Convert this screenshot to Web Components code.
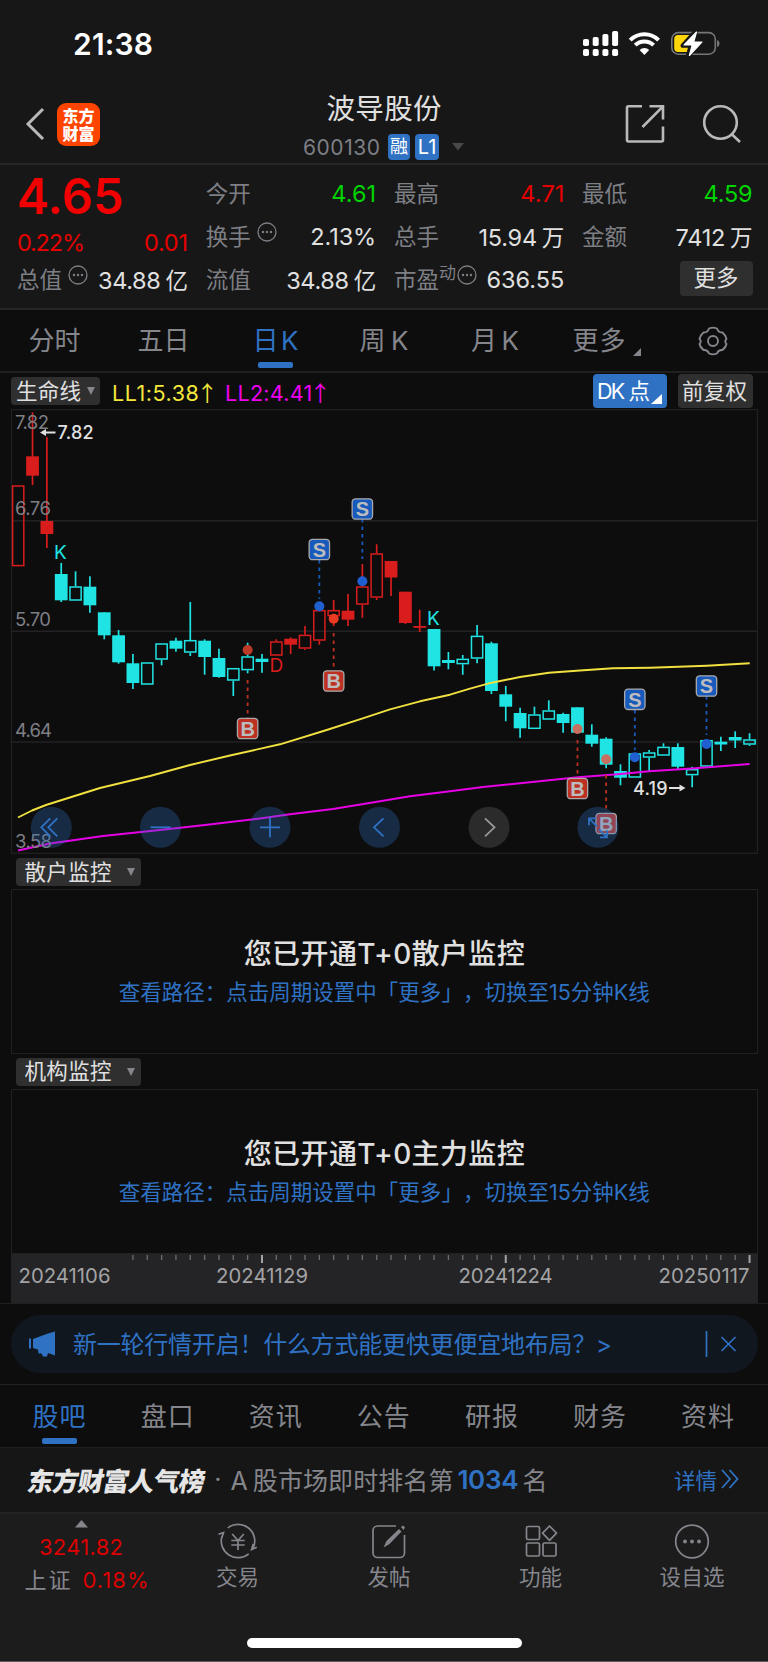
<!DOCTYPE html>
<html lang="zh-CN">
<head>
<meta charset="utf-8">
<title>波导股份 600130</title>
<style>
    html, body {
        margin: 0;
        background: #0d0d0d;
    }
    body {
        width: 768px;
        height: 1662px;
        overflow: hidden;
        font-family: Inter, "Noto Sans CJK SC", sans-serif;
        color: #e0e0e0;
    }
</style>
</head>
<body>
<stock-page></stock-page>

<script>
// Text stretched or tightened to a given width through letter-spacing
class FitText extends HTMLElement {
    connectedCallback() {
        const shadowRoot = this.attachShadow({ mode: 'open' });
        shadowRoot.innerHTML = `
        <style>
            :host {
                display: inline-block;
                white-space: nowrap;
                flex: none;
            }
            span { display: inline-block; }
            ::slotted(i) {
                font-style: normal;
                margin-left: 5px;
            }
            ::slotted(i.arrow) {
                font-family: "Noto Sans CJK SC", sans-serif;
                margin: 0 -5px 0 -3px;
            }
        </style>
        <span><slot></slot></span>
        `;
        const width = parseFloat(this.getAttribute('w'));
        const span = shadowRoot.querySelector('span');
        const count = [...this.textContent].length;
        if (width && count > 1) {
            const spacing = (width - span.getBoundingClientRect().width) / (count - 1);
            span.style.letterSpacing = spacing + 'px';
            span.style.marginRight = -spacing + 'px';
        }
    }
}

class StatusBar extends HTMLElement {
    connectedCallback() {
        const shadowRoot = this.attachShadow({ mode: 'open' });
        let signal = '';
        [[39, 7], [37, 9], [34, 12], [31, 15]].forEach(([y, h], i) => {
            const x = 12 + i * 9.7;
            signal += `<rect x="${x}" y="${y}" width="6" height="${h}" rx="1.8"/><rect x="${x}" y="49" width="6" height="7" rx="1.8"/>`;
        });
        shadowRoot.innerHTML = `
        <style>
            :host {
                display: flex;
                justify-content: space-between;
                height: 88px;
                padding: 0 37px 0 73px;
                background: #171717;
            }
            fit-text {
                font-size: 30px;
                font-weight: 600;
                line-height: 88px;
                color: #fff;
            }
        </style>
        <fit-text w="80">21:38</fit-text>
        <svg width="160" height="88" viewBox="0 0 160 88" fill="#fff">
            ${signal}
            <g fill="none" stroke="#fff" stroke-width="4">
                <path d="M59.2 40.2a20 20 0 0 1 28.4 0"/>
                <path d="M64.2 45.2a13 13 0 0 1 18.4 0"/>
            </g>
            <path d="M68.6 50a7 7 0 0 1 9.6 0l-4.8 5z"/>
            <rect x="100.8" y="32.6" width="43.5" height="21.6" rx="6.5" fill="none" stroke="#767676" stroke-width="1.6"/>
            <path d="M146 40v7q2.6-.8 2.6-3.5t-2.6-3.5z" fill="#767676"/>
            <rect x="103.2" y="35" width="18" height="17" rx="4" fill="#ffd60a"/>
            <path d="M125 30.5l-13.5 15.2h8l-3 11.5 13.5-15.5h-8z" stroke="#171717" stroke-width="4" stroke-linejoin="round"/>
            <path d="M125.5 32l-12.5 13h8.2l-2.8 10.5 12.5-13.5h-8.2z" stroke="#fff" stroke-width="1.2" stroke-linejoin="round"/>
        </svg>
        `;
    }
}

class StockHeader extends HTMLElement {
    connectedCallback() {
        const shadowRoot = this.attachShadow({ mode: 'open' });
        shadowRoot.innerHTML = `
        <style>
            :host {
                display: grid;
                grid-template-columns: 280px 208px 280px;
                height: 75px;
                background: #171717;
                border-bottom: 2px solid #262626;
            }
            .left {
                display: flex;
                align-items: center;
                padding: 0 0 4px 25px;
                gap: 11px;
            }
            .logo {
                width: 43px;
                height: 43px;
                border-radius: 9px;
                background: #ff4400;
                color: #fff;
                font-size: 16px;
                font-weight: 900;
                line-height: 18px;
                text-align: center;
                padding-top: 4px;
                box-sizing: border-box;
            }
            .center {
                display: flex;
                flex-direction: column;
                align-items: center;
            }
            .name {
                font-size: 28.5px;
                line-height: 42px;
            }
            .code {
                display: flex;
                align-items: center;
                height: 34px;
                width: 162px;
                font-size: 21px;
                color: #7e7f85;
            }
            .badge {
                background: #2f72c4;
                border-radius: 4px;
                color: #fff;
                height: 26px;
                width: 22px;
                line-height: 26px;
                text-align: center;
                font-size: 18px;
                margin-left: 8px;
            }
            .badge + .badge {
                font-size: 20px;
                width: 24px;
                margin-left: 5px;
            }
            .code svg { margin-left: 13px; }
            .right {
                display: flex;
                justify-content: flex-end;
                align-items: center;
                gap: 36px;
                padding: 0 26px 5px 0;
            }
        </style>
        <div class="left">
            <svg width="21" height="34" viewBox="0 0 21 34" fill="none" stroke="#b9b9b9" stroke-width="3"><path d="M18 2L3 17l15 15"/></svg>
            <div class="logo">东方<br>财富</div>
        </div>
        <div class="center">
            <fit-text class="name" w="115">波导股份</fit-text>
            <div class="code">
                <fit-text w="77">600130</fit-text>
                <span class="badge">融</span><span class="badge">L1</span>
                <svg width="12" height="8" viewBox="0 0 12 8" fill="#48484a"><path d="M0 0h12L6 7.5z"/></svg>
            </div>
        </div>
        <div class="right">
            <svg width="42" height="42" viewBox="0 0 42 42" fill="none" stroke="#b9b9b9" stroke-width="2.6">
                <path d="M18 3.3H4.5a1.5 1.5 0 0 0-1.5 1.5V37a1.5 1.5 0 0 0 1.5 1.5h33A1.5 1.5 0 0 0 39 37V23.5M25.5 3.3H39V16.5M39 3.3L18.5 24"/>
            </svg>
            <svg width="40" height="42" viewBox="0 0 40 42" fill="none" stroke="#b9b9b9" stroke-width="2.6">
                <circle cx="18.5" cy="19.5" r="16.3"/><path d="M29.5 31l8.5 8"/>
            </svg>
        </div>
        `;
    }
}

class InfoDots extends HTMLElement {
    connectedCallback() {
        const shadowRoot = this.attachShadow({ mode: 'open' });
        shadowRoot.innerHTML = `
        <style>
            :host { display: block; width: 20px; height: 20px; margin: 0 0 6px 6px; }
            svg { display: block; }
        </style>
        <svg width="20" height="20" viewBox="0 0 20 20" fill="#7e7f85">
            <circle cx="10" cy="10" r="9" fill="none" stroke="#7e7f85" stroke-width="1.3"/>
            <circle cx="6" cy="10" r="1.2"/><circle cx="10" cy="10" r="1.2"/><circle cx="14" cy="10" r="1.2"/>
        </svg>
        `;
    }
}

class QuoteCell extends HTMLElement {
    connectedCallback() {
        const shadowRoot = this.attachShadow({ mode: 'open' });
        const unit = this.getAttribute('unit');
        shadowRoot.innerHTML = `
        <style>
            :host {
                display: flex;
                align-items: center;
                justify-content: space-between;
                height: 43px;
                font-size: 22.5px;
                color: #e0e0e0;
            }
            .label {
                display: flex;
                align-items: center;
                color: #7e7f85;
                margin-top: -1px;
            }
            fit-text { font-size: 23.5px; }
            i { font-size: 22.5px; }
            .plain { margin-top: 1px; }
            :host([dir-color="up"]) fit-text { color: #e60000; }
            :host([dir-color="down"]) fit-text { color: #00d400; }
            sup {
                font-size: 17px;
                line-height: 17px;
                margin-bottom: 9px;
                vertical-align: baseline;
            }
            sup + info-dots { margin-left: 1px; }
        </style>
        <div class="label"><slot></slot>${this.hasAttribute('sup') ? `<sup>${this.getAttribute('sup')}</sup>` : ''}${this.hasAttribute('info') ? '<info-dots></info-dots>' : ''}</div>
        <fit-text class="${unit ? '' : 'plain'}" w="${this.getAttribute('w')}">${this.getAttribute('value')}${unit ? `<i>${unit}</i>` : ''}</fit-text>
        `;
    }
}

class QuotePanel extends HTMLElement {
    connectedCallback() {
        const shadowRoot = this.attachShadow({ mode: 'open' });
        shadowRoot.innerHTML = `
        <style>
            :host {
                display: grid;
                grid-template-columns: 171px 170.5px 170.5px 170.5px;
                column-gap: 17.7px;
                grid-template-rows: repeat(3, 43px);
                height: 145px;
                padding: 6px 0 0 17px;
                box-sizing: border-box;
                background: #171717;
                border-bottom: 2px solid #262626;
            }
            .price {
                grid-row: span 2;
                color: #f00000;
                padding-top: 1px;
            }
            .big {
                display: block;
                font-size: 49px;
                font-weight: 600;
                line-height: 50px;
            }
            .change {
                display: flex;
                justify-content: space-between;
                font-size: 23.5px;
                line-height: 42px;
                color: #e60000;
            }
            .more {
                justify-self: end;
                align-self: center;
                background: #2f2f2f;
                border-radius: 4px;
                width: 73px;
                height: 35px;
                line-height: 34px;
                text-align: center;
                font-size: 22.5px;
                margin-bottom: 1px;
            }
        </style>
        <div class="price">
            <fit-text class="big" w="107">4.65</fit-text>
            <div class="change"><fit-text w="68">0.22%</fit-text><fit-text w="44">0.01</fit-text></div>
        </div>
        <quote-cell value="4.61" w="45" dir-color="down">今开</quote-cell>
        <quote-cell value="4.71" w="44" dir-color="up">最高</quote-cell>
        <quote-cell value="4.59" w="49" dir-color="down">最低</quote-cell>
        <quote-cell value="2.13%" w="66" info>换手</quote-cell>
        <quote-cell value="15.94" unit="万" w="86">总手</quote-cell>
        <quote-cell value="7412" unit="万" w="77">金额</quote-cell>
        <quote-cell value="34.88" unit="亿" w="90" info>总值</quote-cell>
        <quote-cell value="34.88" unit="亿" w="90">流值</quote-cell>
        <quote-cell value="636.55" w="78" sup="动" info>市盈</quote-cell>
        <div class="more">更多</div>
        `;
    }
}

class PeriodTabs extends HTMLElement {
    connectedCallback() {
        const shadowRoot = this.attachShadow({ mode: 'open' });
        shadowRoot.innerHTML = `
        <style>
            :host {
                display: grid;
                grid-template-columns: 109px 109px 115px 102px 120px 103px 1fr;
                height: 63px;
                box-sizing: border-box;
                border-bottom: 2px solid #202020;
                font-size: 26px;
                line-height: 62px;
                color: #85868c;
            }
            div {
                display: flex;
                justify-content: center;
            }
            .active {
                color: #2f72c4;
                flex-direction: column;
                justify-content: flex-start;
                align-items: center;
            }
            .active::after {
                content: "";
                width: 35px;
                height: 6px;
                border-radius: 2px;
                background: #2f72c4;
                margin-top: -10px;
            }
            .corner { align-self: end; margin: 0 0 16px 7px; }
            .gear { padding-top: 15px; box-sizing: border-box; }
        </style>
        <div><fit-text w="52">分时</fit-text></div>
        <div><fit-text w="52">五日</fit-text></div>
        <div class="active"><fit-text w="46">日<i>K</i></fit-text></div>
        <div><fit-text w="49">周<i>K</i></fit-text></div>
        <div><fit-text w="48">月<i>K</i></fit-text></div>
        <div><fit-text w="53">更多</fit-text><svg class="corner" width="8" height="8"><path d="M8 0v8H0z" fill="#85868c"/></svg></div>
        <div class="gear">
            <svg width="32" height="32" viewBox="0 0 32 32" fill="none" stroke="#85868c" stroke-width="1.9" stroke-linejoin="round">
                <path d="M12 3.5Q16 1.8 20 3.5Q21.5 7.8 25.5 7.5Q29 10.5 29.5 14Q27 16 29.5 19Q29 22 25.5 25Q21.5 24.500 20 28.500Q16 30.200 12 28.500Q10.500 24.500 6.500 25Q3 22 2.500 19Q5 16 2.500 14Q3 10.500 6.500 7.500Q10.500 7.800 12 3.500z"/>
                <circle cx="16" cy="16" r="5"/>
            </svg>
        </div>
        `;
    }
}

class IndicatorBar extends HTMLElement {
    connectedCallback() {
        const shadowRoot = this.attachShadow({ mode: 'open' });
        shadowRoot.innerHTML = `
        <style>
            :host {
                display: flex;
                align-items: center;
                height: 36px;
                padding: 0 15px 0 11px;
                font-size: 21.5px;
            }
            .pick {
                display: flex;
                align-items: center;
                width: 89px;
                height: 28px;
                border-radius: 4px;
                background: #2f2f2f;
                padding-left: 5px;
                box-sizing: border-box;
                line-height: 28px;
            }
            .pick svg { margin-left: 6px; }
            .ll1 { color: #f5e63c; margin-left: 12px; }
            .ll2 { color: #ee00ee; margin-left: 12px; }
            .dk, .fq {
                height: 34px;
                line-height: 34px;
                border-radius: 4px;
                box-sizing: border-box;
                padding-left: 4px;
            }
            .dk {
                display: flex;
                align-items: center;
                width: 74px;
                background: #2f72c4;
                color: #fff;
                margin-left: auto;
            }
            .dk svg { align-self: end; margin: 0 0 4px 1px; }
            .fq { width: 75px; background: #2f2f2f; margin-left: 11px; }
        </style>
        <div class="pick"><fit-text w="65">生命线</fit-text><svg width="8" height="8"><path d="M0 0h8L4 8z" fill="#85868c"/></svg></div>
        <fit-text class="ll1" w="101">LL1:5.38<i class="arrow">↑</i></fit-text>
        <fit-text class="ll2" w="101">LL2:4.41<i class="arrow">↑</i></fit-text>
        <div class="dk"><fit-text w="53">DK<i>点</i></fit-text><svg width="11" height="10"><path d="M11 0v10H0z" fill="#fff"/></svg></div>
        <div class="fq"><fit-text w="65">前复权</fit-text></div>
        `;
    }
}

const RED = '#d91c1c';
const CYAN = '#20e4e4';

// [color, hollow, high, body top, body bottom, low] in page pixels
const candles = [
    ['r', 1, 485.3, 485.3, 566.3, 566.3], ['r', 0, 412.3, 456.3, 475.7, 485], ['r', 0, 437, 521, 534, 548],
    ['c', 0, 563, 574, 600.3, 602], ['c', 1, 571.3, 586.3, 600.7, 600.7], ['c', 0, 576.3, 586.7, 605.3, 612.7],
    ['c', 0, 612.3, 612.3, 635.3, 639.3], ['c', 0, 630, 635.3, 662.3, 663.7], ['c', 0, 654, 663.3, 683, 689],
    ['c', 1, 662.3, 662.3, 684.7, 684.7], ['c', 1, 643.3, 643.3, 659.7, 665.3], ['c', 0, 637.7, 640.7, 648.7, 651.7],
    ['c', 1, 602, 640, 652.7, 656], ['c', 0, 639.3, 640.7, 657, 674.7], ['c', 0, 648.7, 658, 677, 677.7],
    ['c', 1, 668, 668, 680.7, 696], ['c', 1, 642.7, 656.3, 670.3, 673.3], ['c', 0, 654, 658.7, 662, 672.7],
    ['r', 1, 639.3, 641.3, 655.7, 655.7], ['r', 0, 637.3, 638.7, 644.7, 654], ['r', 1, 626, 634.7, 648.7, 650],
    ['r', 1, 604, 610, 640.7, 644.7], ['r', 1, 600, 610, 616.3, 626], ['r', 0, 594, 610.7, 619.7, 626],
    ['r', 1, 564, 586.3, 604.7, 617.7], ['r', 1, 544.3, 553.3, 597.7, 600], ['r', 0, 561, 561, 577.5, 596],
    ['r', 0, 591.7, 591.7, 623, 624], ['r', 0, 609.7, 626, 627.8, 632], ['c', 0, 629, 629, 666.3, 670.5],
    ['c', 0, 652, 660, 663, 669.3], ['c', 1, 655, 658.7, 664.3, 674.7], ['c', 1, 625, 635.7, 658.7, 663.3],
    ['c', 0, 641.7, 643.3, 691, 694], ['c', 0, 686, 694.3, 706.7, 721.3], ['c', 0, 707.7, 713, 728.3, 737.7],
    ['c', 1, 706.7, 714.3, 729, 729], ['c', 1, 700.3, 710.3, 719.7, 719.7], ['c', 0, 712.7, 714, 723, 732.7],
    ['c', 0, 707.3, 707.3, 732.7, 732.7], ['c', 0, 724.3, 734.7, 743.7, 746.7], ['c', 0, 737.3, 738.7, 764.7, 768.3],
    ['c', 0, 764.3, 771, 777.7, 785.3], ['c', 1, 753.3, 753.3, 777.7, 777.7], ['c', 1, 750, 752.3, 757.7, 771],
    ['c', 1, 743.3, 746.7, 755.7, 755.7], ['c', 0, 743.3, 747, 766.7, 769], ['c', 1, 766.7, 769, 775.3, 787.3],
    ['c', 1, 740, 740, 766.7, 766.7], ['c', 0, 736.7, 741.7, 744.5, 751], ['c', 0, 731.3, 737, 740.5, 748],
    ['c', 1, 733.3, 739.3, 744.7, 746]
];

// [candle index, letter, dot y, badge y, dash start, dash end]
const signals = [
    [16, 'B', 650, 728.5, 680, 718], [21, 'S', 606.3, 549.5, 560, 599], [22, 'B', 618.7, 681, 633, 671],
    [24, 'S', 581.3, 509, 519, 559], [39, 'B', 729, 788.5, 740, 778], [41, 'B', 759.3, 823.5, 775, 813],
    [43, 'S', 757.3, 699.3, 710, 750], [48, 'S', 744, 686, 696, 735]
];

const ll1 = '18,817.5 32,810.5 46,805 73,796.5 100,788 150,776 190,765 230,755.5 280,744.3 326.7,730 362,718.7 390,709.3 420,701.3 450,694.7 470,688.7 491.7,682.7 520,677 549,672.7 580,670.5 613,668.3 650,667.7 706.7,665.7 749.7,663.3';
const ll2 = '18,850.5 50,843.5 103,836 160,830 205,825 260,818.5 290,814.3 333,809 377,801.7 410,796.3 450,791.3 483,787 513,784 577.7,777.3 620.7,774 649,771.3 692,768.5 749.7,764';

class KlineChart extends HTMLElement {
    connectedCallback() {
        const shadowRoot = this.attachShadow({ mode: 'open' });
        const cx = i => 18.2 + 14.34 * i;

        let bars = '';
        candles.forEach(([c, hollow, hi, top, bottom, lo], i) => {
            const color = c === 'r' ? RED : CYAN;
            const x = cx(i);
            if (hollow) {
                bars += `<path d="M${x} ${hi}V${top}M${x} ${bottom}V${lo}" stroke="${color}" stroke-width="1.7"/>
                <rect x="${x - 5.6}" y="${top + 0.7}" width="11.2" height="${bottom - top - 1.4}" fill="none" stroke="${color}" stroke-width="1.5"/>`;
            } else {
                bars += `<path d="M${x} ${hi}V${lo}" stroke="${color}" stroke-width="1.7"/>
                <rect x="${x - 6.4}" y="${top}" width="12.8" height="${bottom - top}" fill="${color}"/>`;
            }
        });

        let marks = '';
        signals.forEach(([i, letter, dot, y, from, to]) => {
            const x = cx(i);
            const fill = letter === 'S' ? '#185abc' : '#bd3122';
            const dotFill = letter === 'S' ? '#1f5fd0' : (i > 30 ? '#c87060' : (i === 22 ? '#ea3a22' : '#bd3a28'));
            marks += `<circle cx="${x}" cy="${dot}" r="5" fill="${dotFill}"/>
            <path d="M${x} ${from}V${to}" stroke="${fill}" stroke-width="1.8" stroke-dasharray="3.6 3.9"/>
            <rect x="${x - 10.2}" y="${y - 10.2}" width="20.4" height="20.4" rx="3.5" fill="${fill}" stroke="#a9a9ab" stroke-width="1.3"/>
            <text x="${x}" y="${y + 7.2}" text-anchor="middle" font-family="Liberation Sans, sans-serif" font-size="20" font-weight="700" fill="#bcbcbe">${letter}</text>`;
        });

        const labels = [[422.5, '7.82', 34], [508.5, '6.76', 36], [619.5, '5.70', 36], [730.5, '4.64', 37], [841.5, '3.58', 37]]
            .map(([y, t, w]) => `<text x="15" y="${y + 6.4}" textLength="${w}" font-size="18.5" fill="#7e7f85">${t}</text>`).join('');

        const buttons = [
            [51.3, 'M-1 -9L-10 0L-1 9M6 -9L-3 0L6 9'],
            [160.5, 'M-10 0H10'],
            [270, 'M-10 0H10M0 -10V10'],
            [379.5, 'M4 -9L-5.5 0L4 9'],
            [489, 'M-4 -9L5.5 0L-4 9'],
            [598, 'M-9 -2V-9H-2M-9 -9L-1 -1M9 3V10H2M9 10L1 2']
        ].map(([x, d], i) => `<g transform="translate(${x} 827.3)">
            <circle r="20.5" fill="${i === 4 ? '#2b2b2c' : 'rgba(47,114,196,.3)'}"/>
            <path d="${d}" fill="none" stroke="${i === 4 ? '#98989a' : '#2f72c4'}" stroke-width="1.8"/></g>`).join('');

        shadowRoot.innerHTML = `
        <style>
            :host { display: block; height: 445.5px; padding-left: 10px; }
            svg { display: block; }
        </style>
        <svg width="748" height="445" viewBox="10 409 748 445" font-family="Inter, sans-serif">
            <path d="M11 520.7H757M11 631.3H757M11 742H757" stroke="#222224" stroke-width="1.6"/>
            <rect x="11.5" y="409.6" width="746" height="443.7" fill="none" stroke="#202022" stroke-width="1.3"/>
            ${bars}
            <polyline points="${ll1}" fill="none" stroke="#f0e040" stroke-width="1.9" stroke-linejoin="round"/>
            <polyline points="${ll2}" fill="none" stroke="#e600e6" stroke-width="1.9" stroke-linejoin="round"/>
            ${labels}
            ${marks}
            <g font-size="19" fill="${CYAN}">
                <text x="54" y="558.5">K</text>
                <text x="427" y="624.8">K</text>
                <text x="269.5" y="671.5" fill="${RED}">D</text>
            </g>
            <g font-size="18" font-weight="500" fill="#e0e0e0">
                <text x="57.5" y="439.2" textLength="36">7.82</text>
                <text x="633" y="795" textLength="34.5">4.19</text>
            </g>
            <path d="M55.5 432.5H43M669 788H682" stroke="#e0e0e0" stroke-width="1.8"/>
            <path d="M40 432.5l6-3.5v7zM685.5 788l-6-3.5v7z" fill="#e0e0e0"/>
            ${buttons}
        </svg>
        `;
    }
}

class MonitorPanel extends HTMLElement {
    connectedCallback() {
        const shadowRoot = this.attachShadow({ mode: 'open' });
        shadowRoot.innerHTML = `
        <style>
            :host { display: block; height: 199.5px; }
            .pick {
                display: flex;
                align-items: center;
                width: 125px;
                height: 28px;
                margin: 3.5px 0 3px 15.5px;
                padding-left: 9px;
                box-sizing: border-box;
                border-radius: 4px;
                background: #2f2f2f;
                font-size: 21.5px;
                line-height: 27px;
            }
            .pick svg { margin-left: 15px; }
            .box {
                margin: 0 10.5px 0 11px;
                height: 165px;
                box-sizing: border-box;
                border: 1px solid #202022;
                display: flex;
                flex-direction: column;
                align-items: center;
                padding-top: 43px;
            }
            .title {
                font-size: 28px;
                font-weight: 500;
                line-height: 42px;
            }
            .sub {
                font-size: 21.5px;
                line-height: 35px;
                color: #2f72c4;
                text-spacing-trim: space-all;
                font-kerning: none;
            }
        </style>
        <div class="pick"><fit-text w="87">${this.getAttribute('name')}</fit-text><svg width="8" height="8"><path d="M0 0h8L4 8z" fill="#85868c"/></svg></div>
        <div class="box">
            <fit-text class="title" w="281">${this.getAttribute('message')}</fit-text>
            <fit-text class="sub" w="531">查看路径：点击周期设置中「更多」，切换至15分钟K线</fit-text>
        </div>
        `;
    }
}

class DateAxis extends HTMLElement {
    connectedCallback() {
        const shadowRoot = this.attachShadow({ mode: 'open' });
        let ticks = '';
        for (let i = 8; i <= 51; i++) {
            const major = i === 17 || i === 34 || i === 51;
            const x = 7.2 + 14.34 * i;
            ticks += `<path d="M${x} 1V${major ? 9 : 6}" stroke="${major ? '#a3a3a5' : '#6e6e70'}" stroke-width="${major ? 2 : 1.3}"/>`;
        }
        shadowRoot.innerHTML = `
        <style>
            :host {
                display: block;
                height: 50.5px;
                box-sizing: border-box;
                padding: 0 10.5px 0 11px;
                border-bottom: 1px solid #202020;
            }
            .axis {
                height: 49.5px;
                background: #242426;
            }
            svg { display: block; }
            .dates {
                display: grid;
                grid-template-columns: 197.5px 242.5px 200px auto;
                padding: 0 0 0 7.5px;
                font-size: 20.3px;
                line-height: 26px;
                color: #a3a3a5;
            }
        </style>
        <div class="axis">
            <svg width="746" height="9">${ticks}</svg>
            <div class="dates">
                <fit-text w="92">20241106</fit-text><fit-text w="92">20241129</fit-text>
                <fit-text w="94">20241224</fit-text><fit-text w="91">20250117</fit-text>
            </div>
        </div>
        `;
    }
}

class PromoBanner extends HTMLElement {
    connectedCallback() {
        const shadowRoot = this.attachShadow({ mode: 'open' });
        shadowRoot.innerHTML = `
        <style>
            :host {
                display: block;
                height: 81px;
                padding: 11px 10.5px 0 11px;
                box-sizing: border-box;
                border-bottom: 1px solid #222;
            }
            div {
                display: flex;
                align-items: center;
                height: 58px;
                border-radius: 29px;
                background: #10171f;
                padding: 0 21px 0 17px;
                color: #2f72c4;
                font-size: 24px;
            }
            fit-text { margin: -3px 0 0 17px; }
            .close { margin: -1px 0 0 auto; }
        </style>
        <div>
            <svg width="28" height="26" viewBox="0 0 28 26" fill="#2f72c4">
                <path d="M1 7.5h2v10H1zM5 8l15-5.5 7-2v24l-7-2.5-1 3.5h-4l-1.5-3h-3l-.5-4-5-1.5z"/>
            </svg>
            <fit-text w="539">新一轮行情开启！什么方式能更快更便宜地布局？&gt;</fit-text>
            <svg class="close" width="32" height="28" viewBox="0 0 32 28" fill="none" stroke="#2f72c4" stroke-width="1.7">
                <path d="M1.5 1v26M16.500 7l14 14M30.500 7l-14 14"/>
            </svg>
        </div>
        `;
    }
}

class ContentTabs extends HTMLElement {
    connectedCallback() {
        const shadowRoot = this.attachShadow({ mode: 'open' });
        const tabs = this.getAttribute('tabs').split(' ');
        shadowRoot.innerHTML = `
        <style>
            :host {
                display: grid;
                grid-template-columns: repeat(7, 108.1px);
                height: 63px;
                padding-left: 5px;
                box-sizing: border-box;
                border-bottom: 1px solid #202020;
                font-size: 26px;
                line-height: 63px;
                color: #85868c;
            }
            div {
                display: flex;
                flex-direction: column;
                align-items: center;
            }
            .active { color: #2f72c4; }
            .active::after {
                content: "";
                width: 35px;
                height: 6px;
                border-radius: 2px;
                background: #2f72c4;
                margin-top: -10px;
            }
        </style>
        ${tabs.map((t, i) => `<div class="${i === 0 ? 'active' : ''}"><fit-text w="53">${t}</fit-text></div>`).join('')}
        `;
    }
}

class RankRow extends HTMLElement {
    connectedCallback() {
        const shadowRoot = this.attachShadow({ mode: 'open' });
        shadowRoot.innerHTML = `
        <style>
            :host {
                display: flex;
                align-items: center;
                height: 66px;
                box-sizing: border-box;
                padding: 0 29px 2px 28px;
                background: #161616;
                border-bottom: 2px solid #242424;
                font-size: 25px;
                color: #85868c;
            }
            .brand {
                font-size: 26px;
                font-weight: 900;
                color: #e6e6e6;
                transform: skewX(-10deg);
            }
            .dot { width: 25px; text-align: center; }
            b {
                font-size: 26px;
                font-weight: 600;
                color: #2f72c4;
                margin: 1px 4px 0 4px;
            }
            .more { margin-left: auto; font-size: 21.5px; color: #2f72c4; }
            .arrows { margin-left: 4px; }
        </style>
        <fit-text class="brand" w="184">东方财富人气榜</fit-text>
        <span class="dot">·</span>
        <fit-text w="223">A<i>股</i>市场即时排名第</fit-text>
        <b><fit-text w="61">1034</fit-text></b>
        <span>名</span>
        <fit-text class="more" w="43">详情</fit-text>
        <svg class="arrows" width="18" height="20" viewBox="0 0 18 20" fill="none" stroke="#2f72c4" stroke-width="1.8"><path d="M1 1l8 9-8 9M8.5 1l8 9-8 9"/></svg>
        `;
    }
}

class BottomBar extends HTMLElement {
    connectedCallback() {
        const shadowRoot = this.attachShadow({ mode: 'open' });
        shadowRoot.innerHTML = `
        <style>
            :host {
                display: block;
                height: 148px;
                background: #1c1c1d;
                border-bottom: 1px solid #5a5a5a;
                box-sizing: border-box;
            }
            .items {
                display: grid;
                grid-template-columns: 162px 151px 152px 151px 152px;
                height: 88px;
                color: #85868c;
                font-size: 21.5px;
            }
            .items > div {
                display: flex;
                flex-direction: column;
                align-items: center;
                padding-top: 8px;
                line-height: 30px;
            }
            .items > div > svg { height: 40px; }
            .items > .index { padding-top: 6px; }
            .items > .index > svg { height: 8px; }
            .index { font-size: 22px; color: #dd0000; }
            .index p {
                display: flex;
                gap: 12px;
                margin: 0;
                padding-left: 11px;
                line-height: 26px;
            }
            .index p fit-text:first-child { color: #85868c; }
            .value { line-height: 39px; }
            .home {
                width: 275px;
                height: 10px;
                border-radius: 5px;
                background: #fff;
                margin: 36px auto 0;
            }
        </style>
        <div class="items">
            <div class="index">
                <svg width="13" height="8"><path d="M0 7.5h13L6.5 0z" fill="#85868c"/></svg>
                <fit-text class="value" w="84">3241.82</fit-text>
                <p><fit-text w="46">上证</fit-text><fit-text w="66">0.18%</fit-text></p>
            </div>
            <div>
                <svg width="40" height="40" viewBox="0 0 40 40" fill="none" stroke="#85868c" stroke-width="1.7">
                    <path d="M9.8 5.8A16.7 16.7 0 0 1 35.1 26.2M30.7 31.8A16.7 16.7 0 0 1 3.9 14.5"/>
                    <path d="M.5 12.3l5-1.7-1.6 5M38.8 25.3l-5.2 2.2 1.6-5.5"/>
                    <path d="M14.2 12l5.8 6.5 5.8-6.5M20 18.5v9.5M13.3 18.5h13.4M13.3 23h13.4"/>
                </svg>
                <fit-text w="43">交易</fit-text>
            </div>
            <div>
                <svg width="40" height="40" viewBox="0 0 40 40" fill="none" stroke="#85868c" stroke-width="1.7">
                    <path d="M27 4H8.5A4.5 4.5 0 0 0 4 8.5v22.5a4.5 4.5 0 0 0 4.5 4.5h22.5a4.5 4.5 0 0 0 4.5-4.5V13"/>
                    <path d="M14.5 25.5l3-6.5L30 7l2.5 2.5-12 12.5zM32 5l2-1.5 2 2L34.5 8z" fill="#85868c" stroke="none"/>
                </svg>
                <fit-text w="43">发帖</fit-text>
            </div>
            <div>
                <svg width="40" height="40" viewBox="0 0 40 40" fill="none" stroke="#85868c" stroke-width="1.7">
                    <rect x="5.5" y="4.5" width="13" height="13" rx="1.5"/>
                    <rect x="5.5" y="21" width="13" height="13" rx="1.5"/>
                    <rect x="22" y="21" width="13" height="13" rx="1.5"/>
                    <path d="M28.5 4l7 7.2-7 7.2-7-7.2z" stroke-linejoin="round"/>
                </svg>
                <fit-text w="43">功能</fit-text>
            </div>
            <div>
                <svg width="40" height="40" viewBox="0 0 40 40" fill="#85868c">
                    <circle cx="20" cy="19.5" r="16.3" fill="none" stroke="#85868c" stroke-width="1.7"/>
                    <circle cx="13" cy="19.5" r="1.9"/><circle cx="20" cy="19.5" r="1.9"/><circle cx="27" cy="19.5" r="1.9"/>
                </svg>
                <fit-text w="65">设自选</fit-text>
            </div>
        </div>
        <div class="home"></div>
        `;
    }
}

class StockPage extends HTMLElement {
    connectedCallback() {
        const shadowRoot = this.attachShadow({ mode: 'open' });
        shadowRoot.innerHTML = `
        <style>
            :host {
                display: flex;
                flex-direction: column;
                width: 768px;
                height: 1662px;
            }
            :host > * { flex: none; }
        </style>
        <status-bar></status-bar>
        <stock-header></stock-header>
        <quote-panel></quote-panel>
        <period-tabs></period-tabs>
        <indicator-bar></indicator-bar>
        <kline-chart></kline-chart>
        <monitor-panel name="散户监控" message="您已开通T+0散户监控"></monitor-panel>
        <monitor-panel name="机构监控" message="您已开通T+0主力监控"></monitor-panel>
        <date-axis></date-axis>
        <promo-banner></promo-banner>
        <content-tabs tabs="股吧 盘口 资讯 公告 研报 财务 资料"></content-tabs>
        <rank-row></rank-row>
        <bottom-bar></bottom-bar>
        `;
    }
}

customElements.define('fit-text', FitText);
customElements.define('info-dots', InfoDots);
customElements.define('status-bar', StatusBar);
customElements.define('stock-header', StockHeader);
customElements.define('quote-cell', QuoteCell);
customElements.define('quote-panel', QuotePanel);
customElements.define('period-tabs', PeriodTabs);
customElements.define('indicator-bar', IndicatorBar);
customElements.define('kline-chart', KlineChart);
customElements.define('monitor-panel', MonitorPanel);
customElements.define('date-axis', DateAxis);
customElements.define('promo-banner', PromoBanner);
customElements.define('content-tabs', ContentTabs);
customElements.define('rank-row', RankRow);
customElements.define('bottom-bar', BottomBar);
customElements.define('stock-page', StockPage);
</script>
</body>
</html>
